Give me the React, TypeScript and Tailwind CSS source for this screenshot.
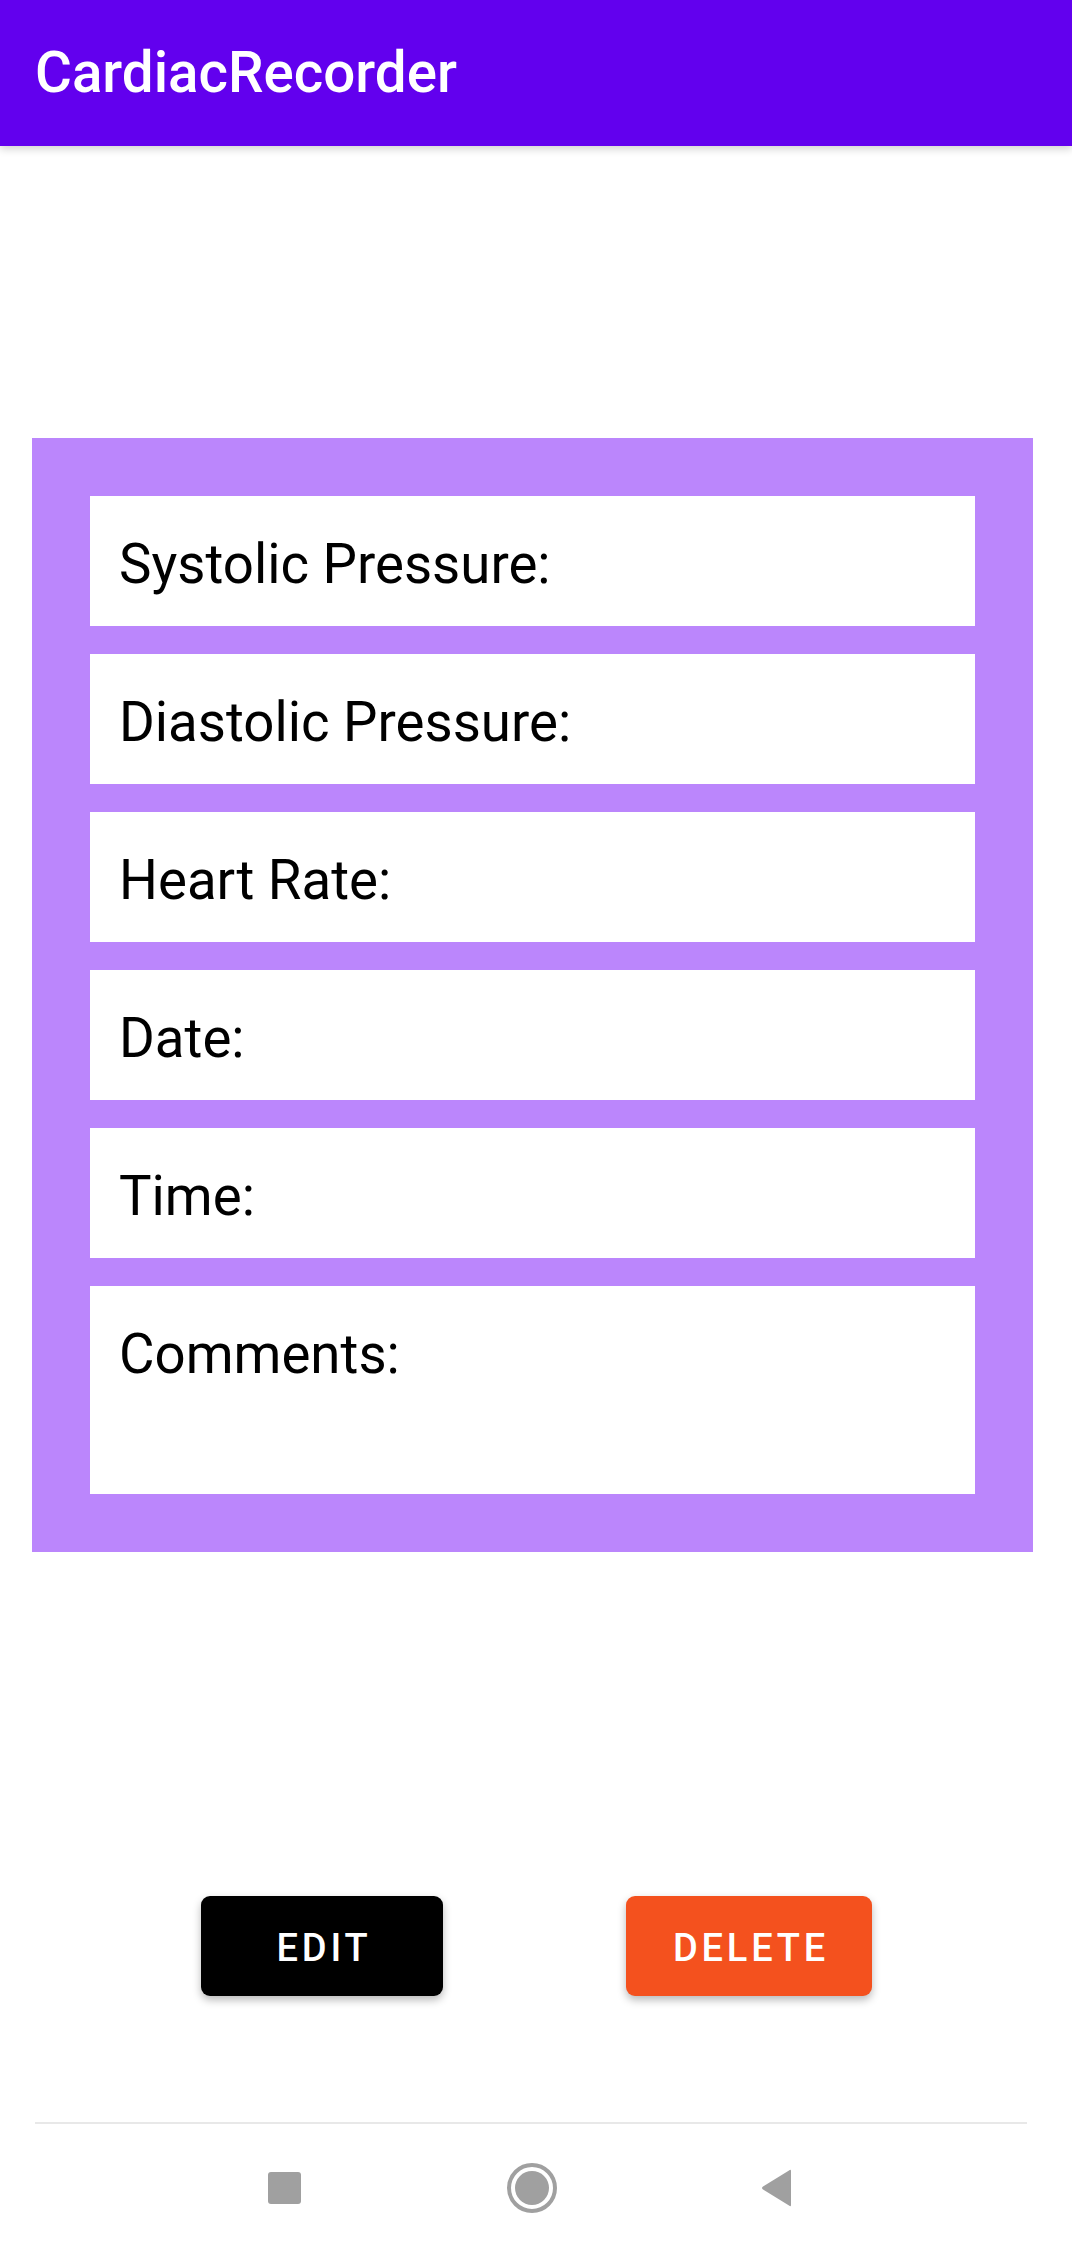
import React from "react";

const rows = [
  { label: "Systolic Pressure:", h: "h-[130px]" },
  { label: "Diastolic Pressure:", h: "h-[130px]" },
  { label: "Heart Rate:", h: "h-[130px]" },
  { label: "Date:", h: "h-[130px]" },
  { label: "Time:", h: "h-[130px]" },
  { label: "Comments:", h: "h-[208px]" },
];

export default function App() {
  return (
    <div className="w-[1072px] h-[2251px] bg-white relative overflow-hidden" style={{ fontFamily: "Roboto, 'Noto Sans', sans-serif" }}>
      <header className="relative z-10 h-[146px] bg-[#6200ee] flex items-center pl-[35px] shadow-[0_3px_8px_rgba(0,0,0,0.18)]">
        <h1 className="text-white text-[56.5px] font-medium leading-none tracking-[0px]">CardiacRecorder</h1>
      </header>

      <div className="mt-[292px] ml-[32px] w-[1001px] bg-[#bb86fc] p-[58px] flex flex-col gap-[28px]">
        {rows.map((r) => (
          <div key={r.label} className={`${r.h} bg-white pl-[29px] pt-[36px]`}>
            <span className="text-black text-[54.6px] leading-[64px] font-normal">{r.label}</span>
          </div>
        ))}
      </div>

      <div className="mt-[344px] flex pl-[201px]">
        <button className="w-[242px] h-[100px] rounded-[9px] bg-black text-white text-[38px] font-medium tracking-[0.1em] flex items-center justify-center pt-[5px] pl-[4px] shadow-[0_4px_8px_rgba(0,0,0,0.28)]">
          EDIT
        </button>
        <button className="ml-[183px] w-[246px] h-[100px] rounded-[9px] bg-[#f4511e] text-white text-[38px] font-medium tracking-[0.1em] flex items-center justify-center pt-[5px] pl-[4px] shadow-[0_4px_8px_rgba(0,0,0,0.28)]">
          DELETE
        </button>
      </div>

      <div className="mt-[126px] ml-[35px] w-[992px] border-t-2 border-[#e8e8e8]" />

      <div className="h-[127px] flex items-center pl-[268px]">
        <div className="w-[33px] h-[32px] rounded-[3px] bg-[#a0a0a0]" />
        <div className="ml-[206px] w-[50px] h-[50px] rounded-full border-[4px] border-[#a0a0a0] flex items-center justify-center">
          <div className="w-[34px] h-[34px] rounded-full bg-[#a0a0a0]" />
        </div>
        <svg className="ml-[203px]" width="34" height="38" viewBox="0 0 34 38">
          <path d="M31 2 L31 36 Q31 38 29 36.6 L3 20.6 Q1 19 3 17.4 L29 1.4 Q31 0 31 2 Z" fill="#a0a0a0" />
        </svg>
      </div>
    </div>
  );
}
